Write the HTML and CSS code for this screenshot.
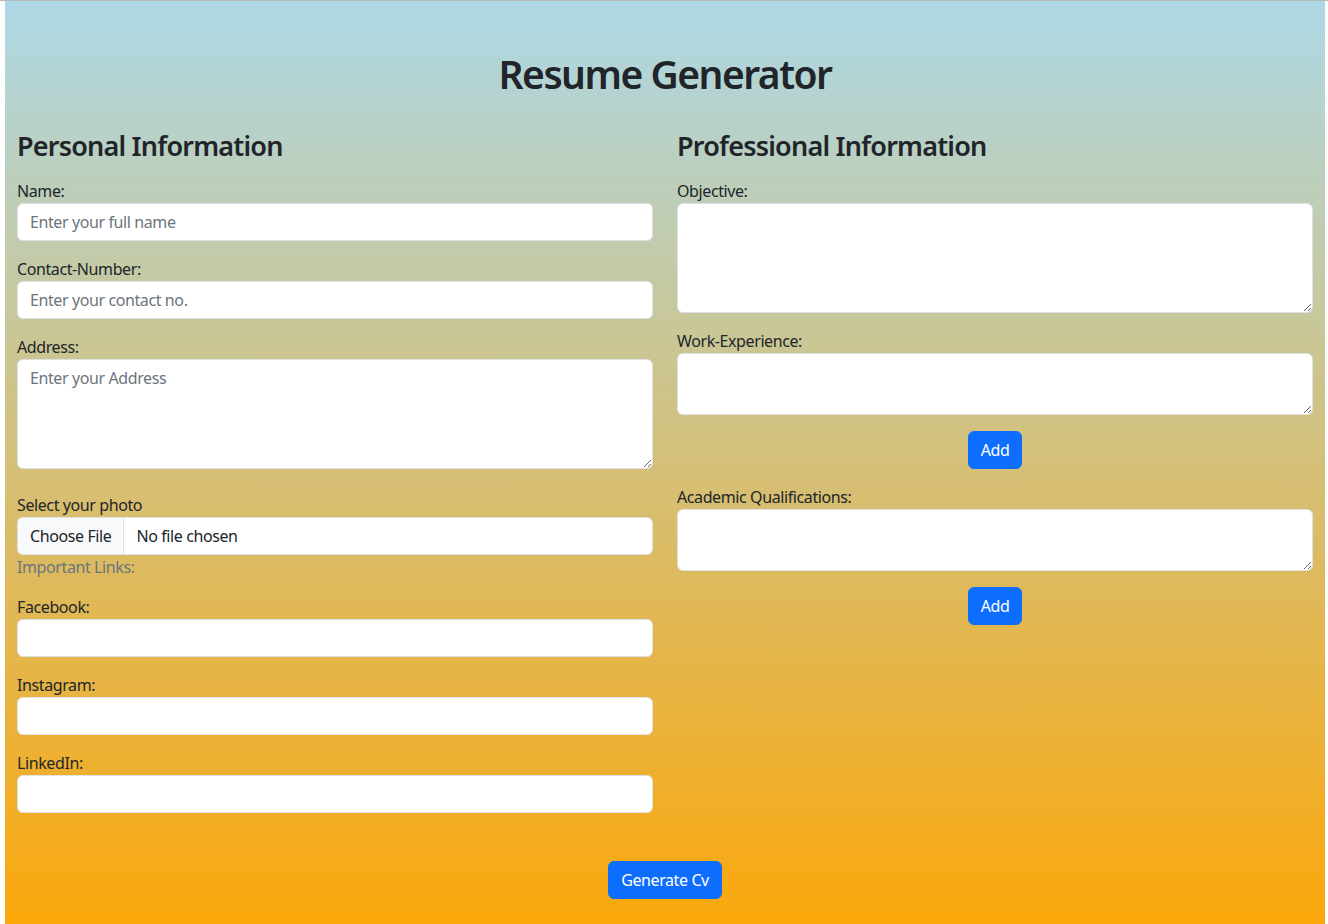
FILE: index.html
```html
<!DOCTYPE html>
<html lang="en">
<head>
<meta charset="utf-8">
<title>Resume Generator</title>
<link rel="stylesheet" href="styles.css">
</head>
<body>
<div class="page">
  <h1 class="title">Resume Generator</h1>
  <div class="row">
    <div class="col">
      <h2 class="section">Personal Information</h2>
      <div class="field">
        <label class="label">Name:</label>
        <input class="control" type="text" placeholder="Enter your full name">
      </div>
      <div class="field">
        <label class="label">Contact-Number:</label>
        <input class="control" type="text" placeholder="Enter your contact no.">
      </div>
      <div class="field field-lg">
        <label class="label">Address:</label>
        <textarea class="control area-tall" placeholder="Enter your Address"></textarea>
      </div>
      <div class="field-tight">
        <label class="label">Select your photo</label>
        <div class="file">
          <span class="file-btn">Choose File</span>
          <span class="file-name">No file chosen</span>
        </div>
      </div>
      <div class="muted">Important Links:</div>
      <div class="field">
        <label class="label">Facebook:</label>
        <input class="control" type="text">
      </div>
      <div class="field">
        <label class="label">Instagram:</label>
        <input class="control" type="text">
      </div>
      <div class="field">
        <label class="label">LinkedIn:</label>
        <input class="control" type="text">
      </div>
    </div>
    <div class="col">
      <h2 class="section">Professional Information</h2>
      <div class="field">
        <label class="label">Objective:</label>
        <textarea class="control area-tall"></textarea>
      </div>
      <div class="field">
        <label class="label">Work-Experience:</label>
        <textarea class="control area-short"></textarea>
      </div>
      <div class="center field">
        <button class="btn" type="button">Add</button>
      </div>
      <div class="field">
        <label class="label">Academic Qualifications:</label>
        <textarea class="control area-short"></textarea>
      </div>
      <div class="center">
        <button class="btn" type="button">Add</button>
      </div>
    </div>
  </div>
  <div class="center footer">
    <button class="btn" type="button">Generate Cv</button>
  </div>
</div>
</body>
</html>
```
FILE: styles.css
```css
html, body {
  margin: 0;
  padding: 0;
}
body {
  background: #fff;
  border-top: 1px solid #b9b9b9;
  font-family: "Noto Sans", "Open Sans", sans-serif;
  color: #212529;
  font-size: 16px;
  line-height: 1.5;
  letter-spacing: -0.4px;
}
.page {
  margin-left: 5px;
  width: 1320px;
  height: 923px;
  box-sizing: border-box;
  background: linear-gradient(to bottom, #add8e6, #ffa500 105%);
  padding-top: 49px;
}
.title {
  margin: 0 0 30px;
  text-align: center;
  font-size: 39px;
  font-weight: 600;
  line-height: 48px;
  letter-spacing: -1.5px;
}
.row {
  display: flex;
}
.col {
  flex: 1 1 0;
  padding: 0 12px;
  display: flex;
  flex-direction: column;
}
.section {
  margin: 0 0 15px;
  font-size: 27px;
  font-weight: 600;
  line-height: 36px;
  letter-spacing: -0.8px;
}
.field {
  margin-bottom: 16px;
}
.field-lg {
  margin-bottom: 24px;
}
.label {
  display: block;
  margin: 0;
  line-height: 24px;
}
.control {
  display: block;
  width: 100%;
  box-sizing: border-box;
  height: 38px;
  padding: 6px 12px;
  font: inherit;
  font-size: 16px;
  line-height: 24px;
  letter-spacing: -0.4px;
  color: #212529;
  background: #fff;
  border: 1px solid #dee2e6;
  border-radius: 6px;
  margin: 0;
  outline: none;
}
.control::placeholder {
  color: #6c757d;
  opacity: 1;
}
textarea.control {
  resize: vertical;
}
.area-tall {
  height: 110px;
}
.area-short {
  height: 62px;
}
.file {
  display: flex;
  height: 38px;
  box-sizing: border-box;
  border: 1px solid #dee2e6;
  border-radius: 6px;
  background: #fff;
  overflow: hidden;
}
.file-btn {
  padding: 6px 12px;
  background: #f8f9fa;
  border-right: 1px solid #dee2e6;
  line-height: 24px;
}
.file-name {
  padding: 6px 12px;
  line-height: 24px;
}
.muted {
  color: #6c757d;
  line-height: 24px;
  margin-bottom: 16px;
}
.center {
  display: flex;
  justify-content: center;
}
.btn {
  font: inherit;
  font-size: 16px;
  line-height: 24px;
  letter-spacing: -0.4px;
  color: #fff;
  background: #0d6efd;
  border: 1px solid #0d6efd;
  border-radius: 6px;
  padding: 6px 12px;
  cursor: pointer;
}
.footer {
  margin-top: 32px;
}
```
